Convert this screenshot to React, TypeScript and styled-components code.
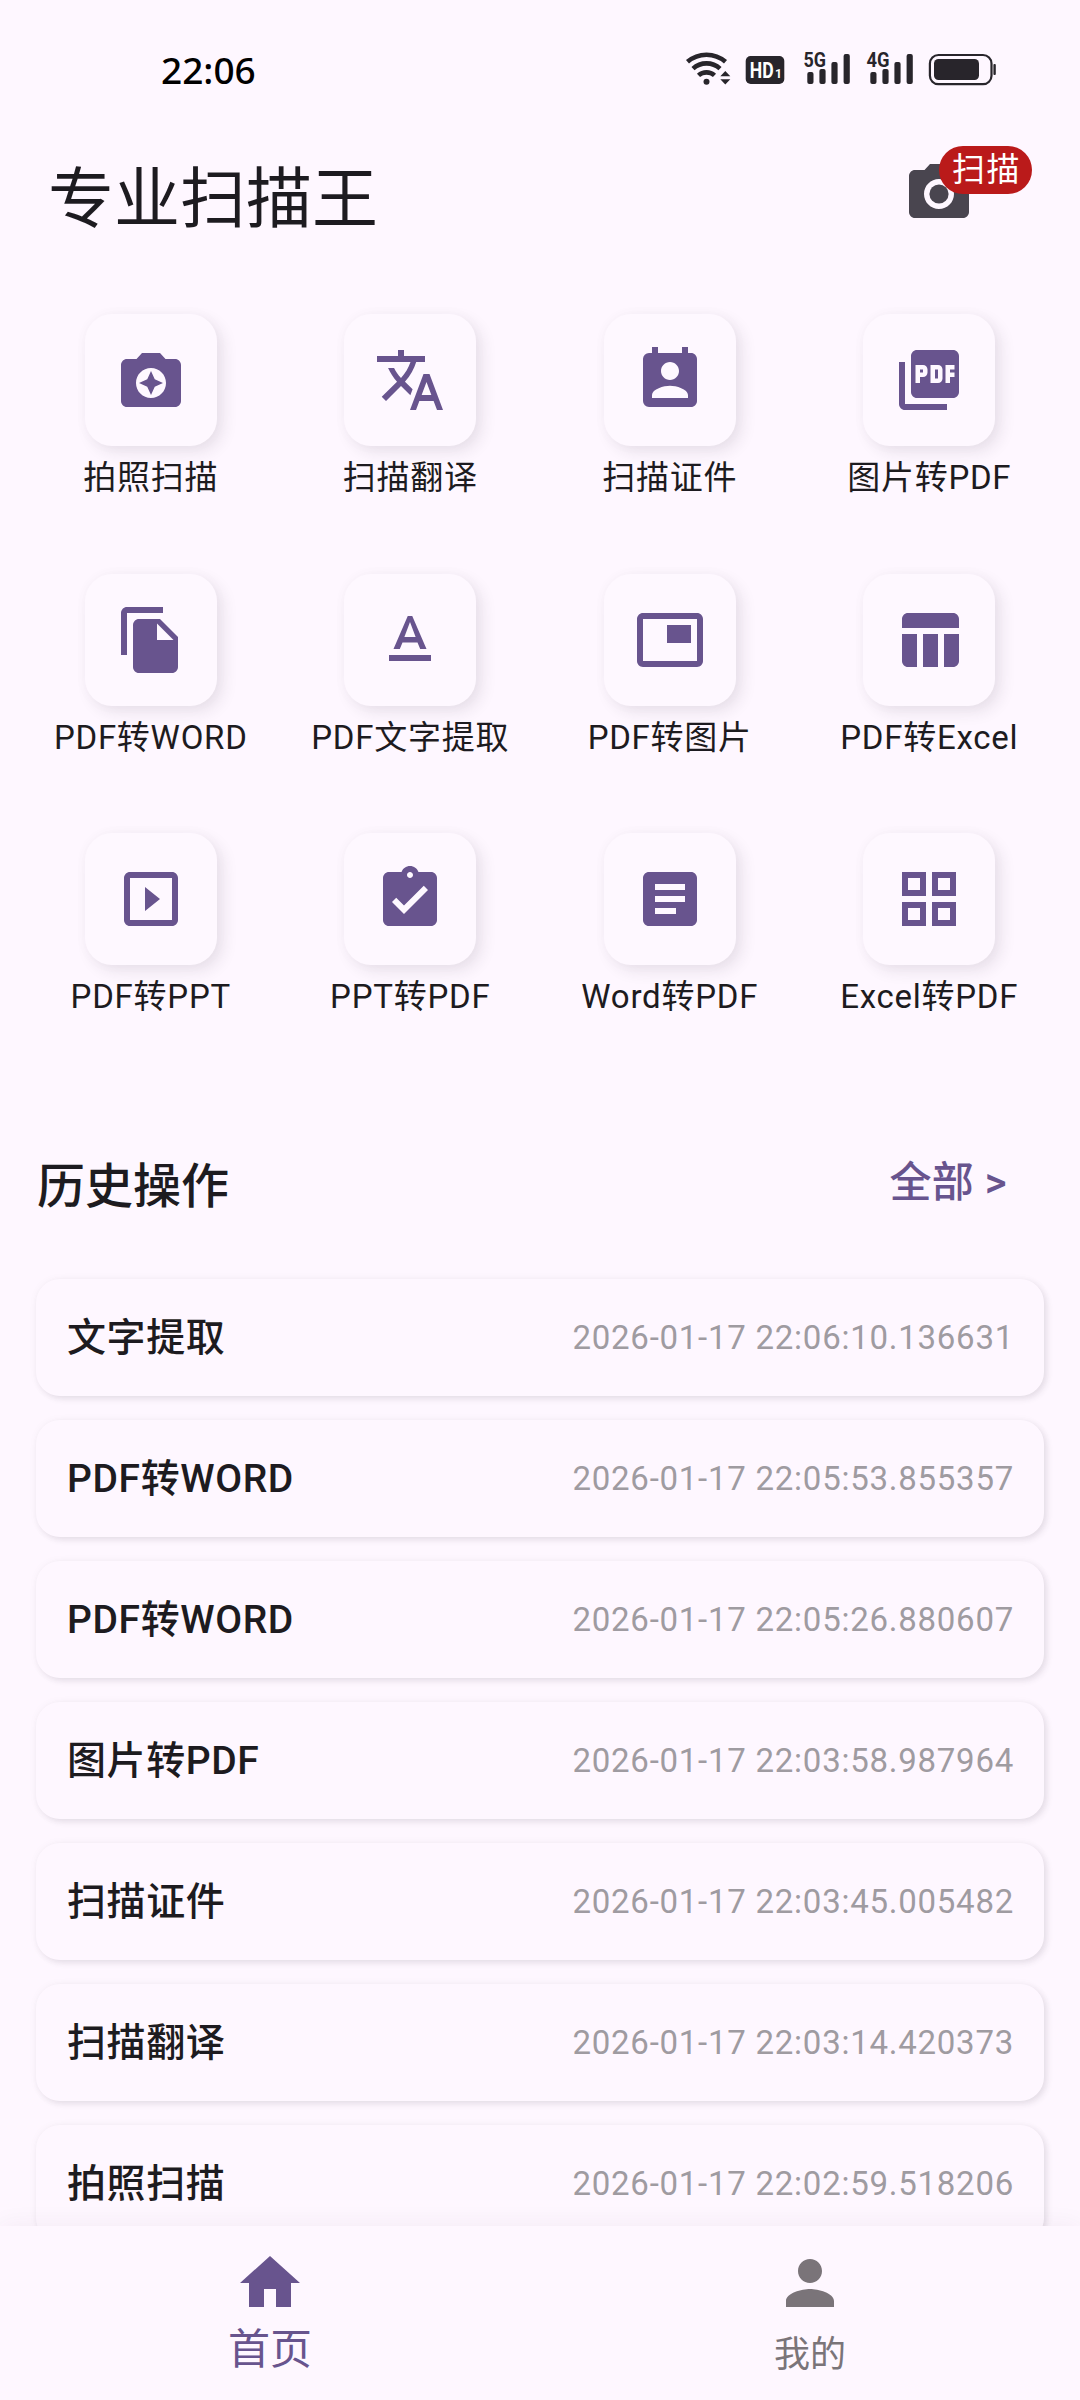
import React from 'react';
import styled, { createGlobalStyle } from 'styled-components';
import type { IconType } from 'react-icons';
import {
  MdArticle,
  MdAssignmentTurnedIn,
  MdCameraAlt,
  MdCameraEnhance,
  MdFileCopy,
  MdGridView,
  MdHome,
  MdPermContactCalendar,
  MdPerson,
  MdPictureAsPdf,
  MdPictureInPicture,
  MdSlideshow,
  MdTableChart,
  MdTextFormat,
  MdTranslate,
} from 'react-icons/md';

const color = {
  surface: '#fef7ff',
  primary: '#68548e',
  text: '#1d1b20',
  muted: '#9f9ba1',
  idle: '#7a7479',
  icon: '#49454f',
  badge: '#ba1a1a',
};

const GlobalStyle = createGlobalStyle`
  *, *::before, *::after { box-sizing: border-box; }
  body {
    margin: 0;
    background: ${color.surface};
    color: ${color.text};
    font-family: Roboto, 'Noto Sans CJK SC', sans-serif;
  }
  svg { display: block; }
`;

const Screen = styled.div`
  display: flex;
  flex-direction: column;
  width: 1080px;
  height: 2400px;
  overflow: hidden;
  background: ${color.surface};
`;

const StatusBar = styled.header`
  display: flex;
  align-items: center;
  justify-content: space-between;
  height: 140px;
  padding: 0 60px 0 161px;
  flex: none;
`;

const Clock = styled.time`
  font: 500 37px/50px 'Noto Sans', sans-serif;
  color: #000;
`;

const TitleBar = styled.div`
  display: flex;
  align-items: flex-start;
  justify-content: space-between;
  height: 120px;
  padding: 18px 105px 0 48px;
  flex: none;
`;

const Title = styled.h1`
  margin: 0;
  font-size: 66px;
  font-weight: 400;
  line-height: 84px;
`;

const CameraButton = styled.button`
  position: relative;
  padding: 0;
  border: 0;
  background: none;
  color: ${color.icon};
`;

const Badge = styled.span`
  position: absolute;
  top: -12px;
  left: 36px;
  height: 48px;
  padding: 0 11px 0 13px;
  border-radius: 24px;
  background: ${color.badge};
  color: #fff;
  font: 400 33px/48px Roboto, 'Noto Sans CJK SC', sans-serif;
  letter-spacing: 1.5px;
  white-space: nowrap;
`;

const Body = styled.main`
  flex: 1;
  min-height: 0;
  overflow: hidden;
`;

const ToolGrid = styled.section`
  display: grid;
  grid-template-columns: repeat(4, 259.5px);
  grid-auto-rows: 259.5px;
  padding: 54px 21px 0;
`;

const Tool = styled.div`
  display: flex;
  flex-direction: column;
  align-items: center;
`;

const Tile = styled.div`
  display: grid;
  place-items: center;
  width: 132px;
  height: 132px;
  border-radius: 27px;
  background: #fef8ff;
  color: ${color.primary};
  box-shadow: 6px 6px 15px rgba(50, 40, 60, 0.1), 0 0 15px rgba(50, 40, 60, 0.025);
`;

const ToolLabel = styled.span`
  margin-top: 10px;
  font-size: 33px;
  line-height: 43px;
  letter-spacing: 0.75px;
  white-space: nowrap;
`;

const SectionHead = styled.div`
  display: flex;
  align-items: flex-start;
  justify-content: space-between;
  height: 124px;
  margin-top: 62px;
  padding: 0 73px 0 37px;
`;

const SectionTitle = styled.h2`
  margin: 0;
  font-size: 48px;
  font-weight: 500;
  line-height: 64px;
`;

const MoreLink = styled.a`
  padding-top: 1px;
  color: ${color.primary};
  font-size: 42px;
  font-weight: 500;
  line-height: 54px;
  letter-spacing: 0.3px;
`;

const History = styled.ul`
  display: flex;
  flex-direction: column;
  gap: 24px;
  margin: 0;
  padding: 0 36px;
  list-style: none;
`;

const HistoryCard = styled.li`
  display: flex;
  align-items: center;
  justify-content: space-between;
  height: 117px;
  padding: 0 30px 0 31px;
  border-radius: 24px;
  background: ${color.surface};
  box-shadow: 3px 3px 6px rgba(50, 40, 60, 0.1), 0 0 9px rgba(50, 40, 60, 0.04);
`;

const HistoryName = styled.span`
  padding-top: 1px;
  font-size: 39px;
  font-weight: 500;
  line-height: 50px;
  letter-spacing: 0.6px;
`;

const HistoryTime = styled.time`
  padding-top: 1px;
  color: ${color.muted};
  font-size: 33px;
  line-height: 44px;
  letter-spacing: 0.75px;
`;

const TabBar = styled.nav`
  display: flex;
  flex: none;
  height: 174px;
  background: ${color.surface};
  box-shadow: 0 0 24px rgba(60, 40, 70, 0.06);
`;

const Tab = styled.div<{ $active?: boolean }>`
  display: flex;
  flex: 1;
  flex-direction: column;
  align-items: center;
  padding-top: 21px;
  color: ${(p) => (p.$active ? color.primary : color.idle)};
`;

const TabLabel = styled.span<{ $active?: boolean }>`
  margin-top: ${(p) => (p.$active ? 4 : 9)}px;
  font-size: ${(p) => (p.$active ? 42 : 36)}px;
  line-height: 54px;
`;

const StatusIcons = () => (
  <svg width="360" height="80" viewBox="0 0 360 80" fill="#28252b">
    <g fill="none" stroke="#28252b" strokeWidth="4.6">
      <path d="M27.5 31.8a29 29 0 0 1 38 0" />
      <path d="M33 38.6a20 20 0 0 1 27 0" />
      <path d="M38.5 45.4a12 12 0 0 1 16 0" />
    </g>
    <circle cx="46.5" cy="51.7" r="3" />
    <path d="M60.3 46.3l5-5.3 5 5.3zM60.3 49.2l5 5.3 5-5.3z" />
    <rect x="85.7" y="26" width="38.6" height="28" rx="5" />
    <text x="89.8" y="48" fill="#fff" fontFamily="Roboto, sans-serif" fontWeight="700" fontSize="22" textLength="23.8" lengthAdjust="spacingAndGlyphs">HD</text>
    <text x="115" y="48" fill="#fff" fontFamily="Roboto, sans-serif" fontWeight="700" fontSize="13.5" textLength="7" lengthAdjust="spacingAndGlyphs">1</text>
    {[0, 63].map((dx) => (
      <g key={dx} transform={`translate(${dx} 0)`}>
        <rect x="147.3" y="42" width="6.2" height="12" rx="2" />
        <rect x="159.4" y="39" width="6.2" height="15" rx="2" />
        <rect x="171.4" y="32" width="6.2" height="22" rx="2" />
        <rect x="183.6" y="24" width="6.2" height="30" rx="2" />
      </g>
    ))}
    <g fontFamily="Roboto, sans-serif" fontWeight="700" fontSize="20.5" stroke={color.surface} strokeWidth="3" paintOrder="stroke">
      <text x="143.5" y="37" textLength="22.5" lengthAdjust="spacingAndGlyphs">5G</text>
      <text x="206.5" y="37" textLength="23" lengthAdjust="spacingAndGlyphs">4G</text>
    </g>
    <rect x="269.9" y="25" width="61.6" height="29.2" rx="8.5" fill="none" stroke="#28252b" strokeWidth="2.2" />
    <rect x="274" y="29" width="45" height="21" rx="4.5" />
    <rect x="333.4" y="34" width="2.4" height="11" rx="1" />
  </svg>
);

const StatusIconSlot = styled.div`
  height: 80px;
`;

const tools: { label: string; Icon: IconType }[] = [
  { label: '拍照扫描', Icon: MdCameraEnhance },
  { label: '扫描翻译', Icon: MdTranslate },
  { label: '扫描证件', Icon: MdPermContactCalendar },
  { label: '图片转PDF', Icon: MdPictureAsPdf },
  { label: 'PDF转WORD', Icon: MdFileCopy },
  { label: 'PDF文字提取', Icon: MdTextFormat },
  { label: 'PDF转图片', Icon: MdPictureInPicture },
  { label: 'PDF转Excel', Icon: MdTableChart },
  { label: 'PDF转PPT', Icon: MdSlideshow },
  { label: 'PPT转PDF', Icon: MdAssignmentTurnedIn },
  { label: 'Word转PDF', Icon: MdArticle },
  { label: 'Excel转PDF', Icon: MdGridView },
];

const history = [
  ['文字提取', '2026-01-17 22:06:10.136631'],
  ['PDF转WORD', '2026-01-17 22:05:53.855357'],
  ['PDF转WORD', '2026-01-17 22:05:26.880607'],
  ['图片转PDF', '2026-01-17 22:03:58.987964'],
  ['扫描证件', '2026-01-17 22:03:45.005482'],
  ['扫描翻译', '2026-01-17 22:03:14.420373'],
  ['拍照扫描', '2026-01-17 22:02:59.518206'],
];

export default function App() {
  return (
    <>
      <GlobalStyle />
      <Screen>
        <StatusBar>
          <Clock>22:06</Clock>
          <StatusIconSlot>
            <StatusIcons />
          </StatusIconSlot>
        </StatusBar>
        <TitleBar>
          <Title>专业扫描王</Title>
          <CameraButton>
            <MdCameraAlt size={72} />
            <Badge>扫描</Badge>
          </CameraButton>
        </TitleBar>
        <Body>
          <ToolGrid>
            {tools.map(({ label, Icon }) => (
              <Tool key={label}>
                <Tile>
                  <Icon size={72} />
                </Tile>
                <ToolLabel>{label}</ToolLabel>
              </Tool>
            ))}
          </ToolGrid>
          <SectionHead>
            <SectionTitle>历史操作</SectionTitle>
            <MoreLink>全部 &gt;</MoreLink>
          </SectionHead>
          <History>
            {history.map(([name, time]) => (
              <HistoryCard key={time}>
                <HistoryName>{name}</HistoryName>
                <HistoryTime>{time}</HistoryTime>
              </HistoryCard>
            ))}
          </History>
        </Body>
        <TabBar>
          <Tab $active>
            <MdHome size={72} />
            <TabLabel $active>首页</TabLabel>
          </Tab>
          <Tab>
            <MdPerson size={72} />
            <TabLabel>我的</TabLabel>
          </Tab>
        </TabBar>
      </Screen>
    </>
  );
}
